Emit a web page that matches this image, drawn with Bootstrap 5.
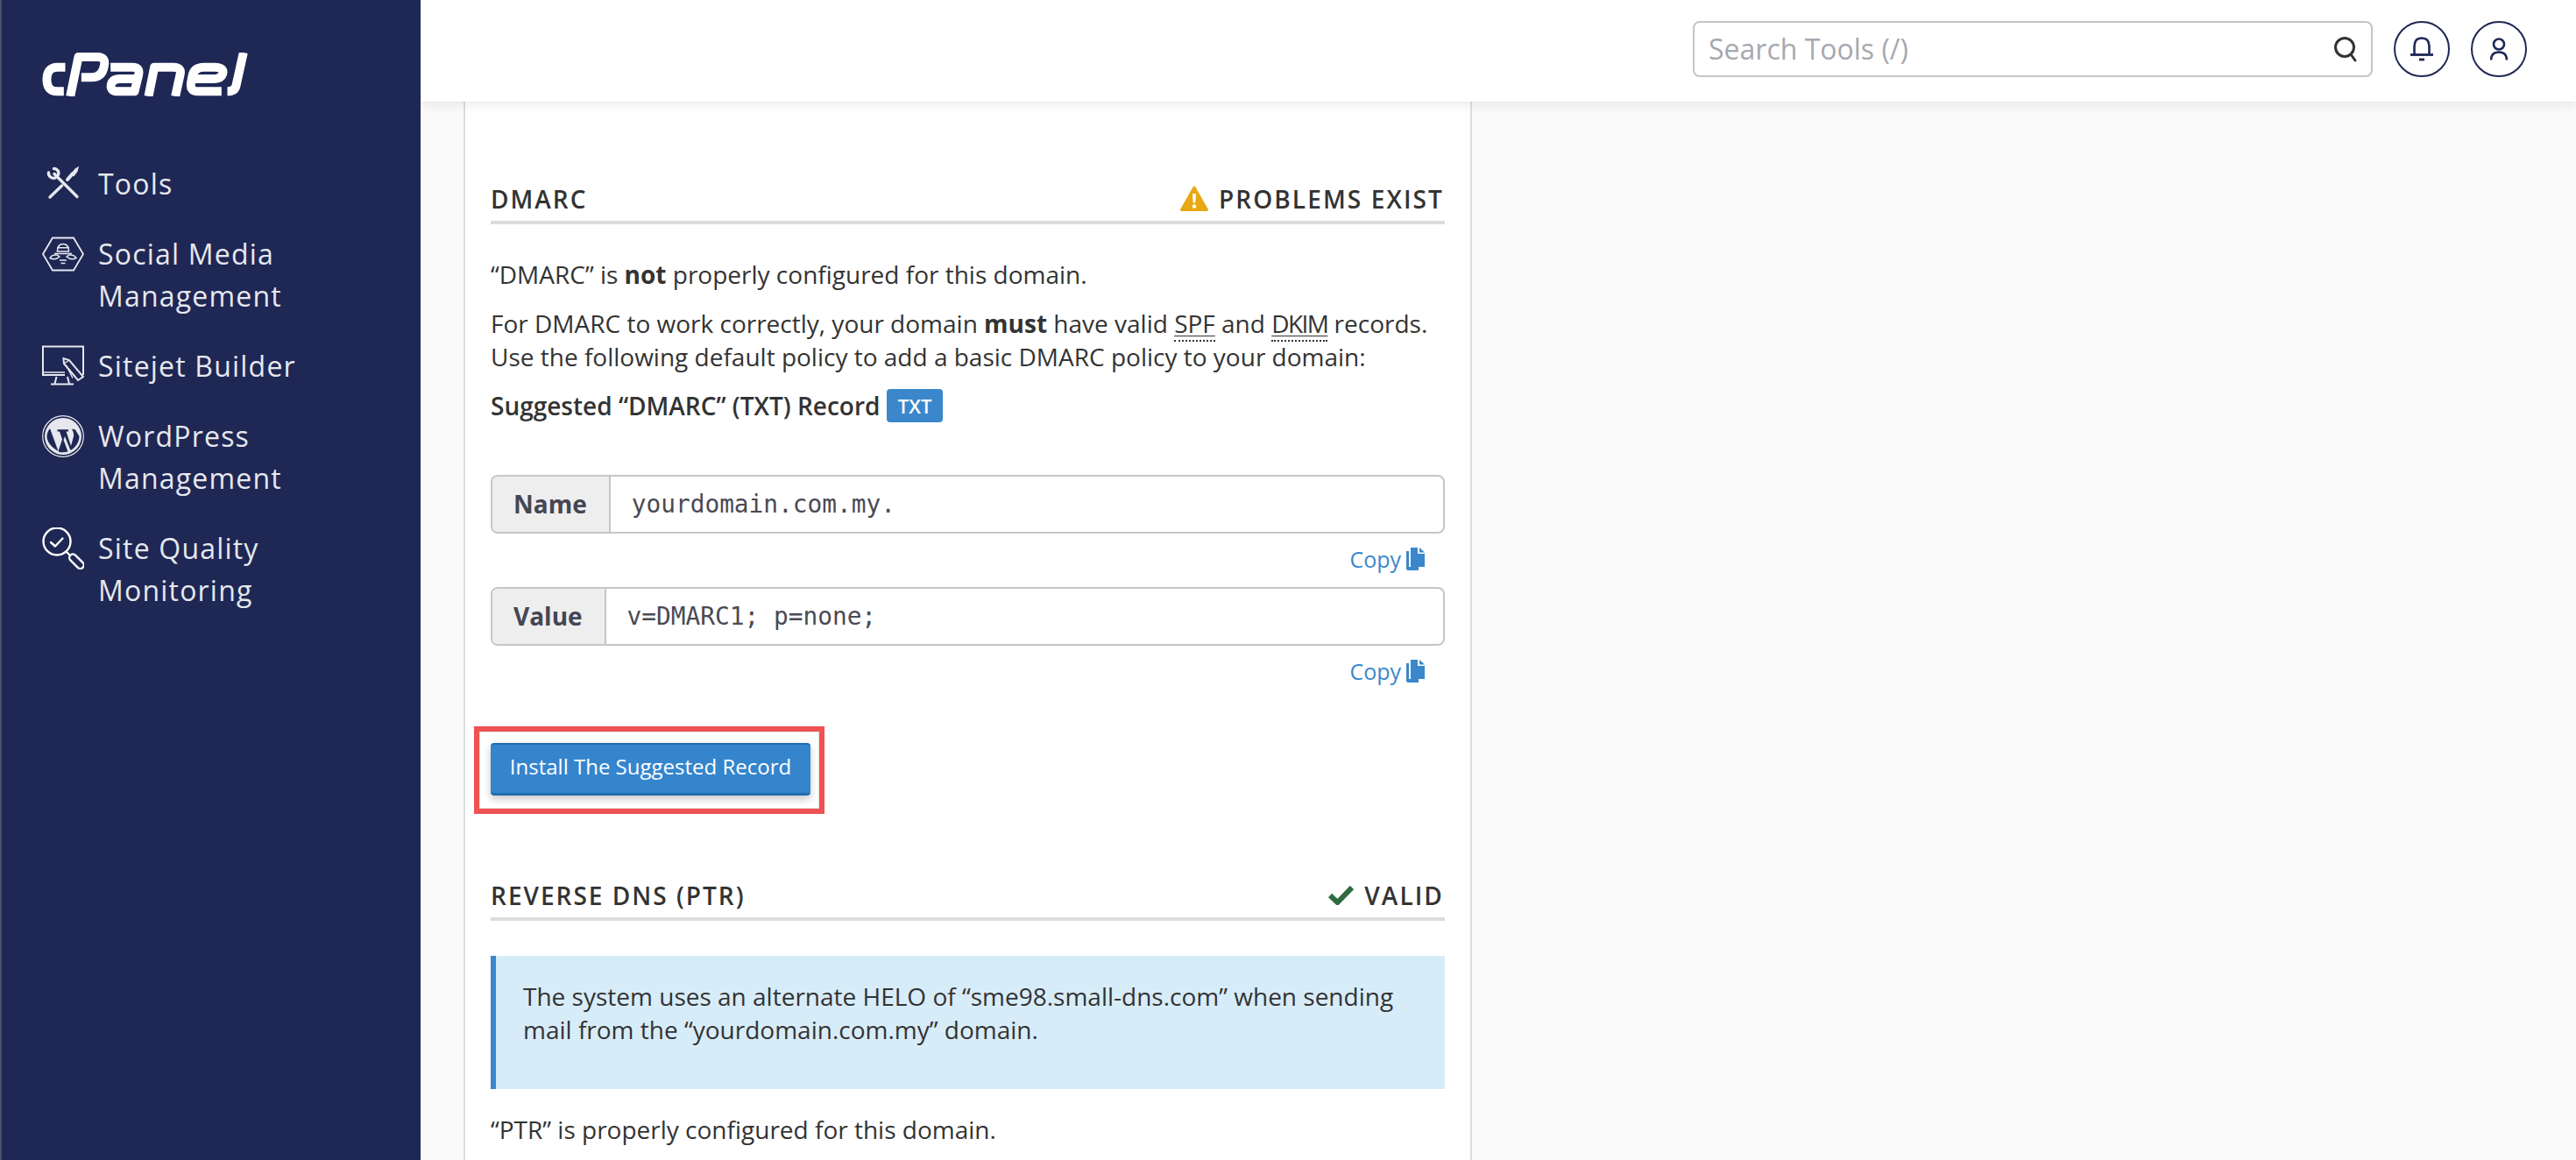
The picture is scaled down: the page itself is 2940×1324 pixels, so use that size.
<!DOCTYPE html>
<html lang="en">
<head>
<meta charset="utf-8">
<title>cPanel - Email Deliverability</title>
<link href="https://cdn.jsdelivr.net/npm/bootstrap@5.3.0/dist/css/bootstrap.min.css" rel="stylesheet">
<style>
html,body{height:100%;margin:0;overflow:hidden}
body{font-family:"Open Sans","Noto Sans",sans-serif;font-size:28px;line-height:38px;color:#333;background:#fafafa}
.app-shell{height:1324px}
.side-rail{width:480px;flex:none;background:#1f2754;border-left:2px solid #4b4f66;color:#e6e8ee;height:1324px}
.brand-wrap{padding:60px 0 0 46px;height:186px}
.brand-wrap svg{display:block}
.side-link{display:flex;gap:16px;padding-left:46px;margin-bottom:32px;font-size:32px;line-height:48px;letter-spacing:1.200px;color:#e6e8ee;text-decoration:none}
.side-ico{width:48px;height:48px;flex:none}
.main-col{flex:1;min-width:0;height:1324px;overflow:hidden}
.top-strip{height:116px;background:#fff;box-shadow:0 4px 12px rgba(0,0,0,.08);padding:24px 56px 0 0;position:relative;z-index:2;justify-content:flex-end;gap:24px}
.search-box{width:776px;height:64px;border:2px solid #c4c4c8;border-radius:8px;padding:0 14px 0 16px;background:#fff;color:#a5a9b0;font-size:32px}
.round-btn{width:64px;height:64px;border:2.500px solid #1f2754;border-radius:50%;background:#fff}
.page-sheet{width:1151px;margin-left:49px;background:#fff;border-left:2px solid #ddd;border-right:2px solid #ddd;padding:92px 29px 0 29px;height:1208px;overflow:hidden}
.sec-head{font-size:28px;line-height:38px;font-weight:600;letter-spacing:2px;padding-bottom:6px;border-bottom:4px solid #dcdcdc;color:#333}
.sec-state{display:flex;align-items:center;gap:12px;padding-right:1px;letter-spacing:2.100px}
.para{margin:0 0 18px}
.para-first{margin-top:38px}
.abbr-dot{border-bottom:2px dotted #333;text-decoration:underline;text-underline-offset:3px;text-decoration-thickness:1px}
.abbr-tight{letter-spacing:-1.600px}
.type-tag{display:inline-block;background:#3a87cb;color:#fff;font-size:22px;font-weight:600;line-height:38px;height:38px;padding:0 13px;border-radius:4px;margin-left:0;vertical-align:top}
.rec-group{display:flex;height:67px;border:2px solid #c6c6ca;border-radius:8px;overflow:hidden;background:#fff}
.rec-first{margin-top:60px}
.rec-label{background:#eee;color:#444654;font-weight:700;padding:0 25px 0 24px;line-height:63px;border-right:2px solid #c6c6ca}
.rec-value{font-family:"DejaVu Sans Mono","Liberation Mono",monospace;color:#4a4a55;font-size:27.800px;line-height:63px;padding-left:24px}
.copy-line{display:flex;justify-content:flex-end;align-items:center;gap:6px;height:38px;margin:10px 22px 13px 0;color:#3a87cb;font-size:25px}
.mark-box{display:inline-block;border:6px solid #ee5253;padding:13px 10px 15px 13px;margin:31px 0 74px -19px;box-shadow:inset 0 0 0 1px #e4e4e4}
.install-btn{display:block;width:365px;height:60px;padding:0 0 5px;background:#3585cd;border:0;border-top:2px solid #206db0;border-bottom:3px solid #206db0;border-radius:4px;color:#fff;font-size:24px;line-height:48px;box-shadow:0 4px 10px rgba(0,0,0,.22)}
.note-box{background:#d7ecf9;border-left:6px solid #3a87cb;padding:27px 30px 49px 31px;margin:40px 0 27px}
</style>
</head>
<body>
<div class="d-flex app-shell">
  <aside class="side-rail">
    <div class="brand-wrap">
      <svg width="236" height="50" viewBox="57 62 705 150" fill="none" stroke="#fff" stroke-width="30" stroke-linecap="butt" stroke-linejoin="round" aria-label="cPanel">
        <path d="M135 112H108Q74 112 72 150Q70 195 108 195H130"/>
        <path d="M152 212L180 77H245Q275 77 268 108Q262 147 225 147H190"/>
        <path d="M290 112H365Q392 112 386 138L372 195H315Q288 195 292 172Q296 152 322 152H380"/>
        <path d="M420 212L440 112H505Q535 112 528 138L512 212"/>
        <path d="M670 195H590Q560 195 566 165L570 142Q576 112 610 112H645Q680 112 674 135Q668 152 640 152H575"/>
        <path d="M745 62L720 175Q716 195 690 195"/>
      </svg>
    </div>
    <a class="side-link" href="#">
      <svg class="side-ico" viewBox="0 0 48 48" fill="none" stroke="#e6e8ee" stroke-width="3.4" stroke-linecap="round"><path d="M14 12.5L40 38.5M7.5 11C7 15 11 18.5 15 17M18.5 13.5C20 9.500 16.500 6 13.500 6.500M22.500 26L9 39"/><path d="M29 19L35 12" stroke-width="4"/><path d="M34 12.500L38 7.500L40.500 6L39.500 9.500L36 14Z" fill="#e6e8ee" stroke-width="2"/></svg>
      <span>Tools</span>
    </a>
    <a class="side-link" href="#">
      <svg class="side-ico" viewBox="0 0 48 48" fill="none" stroke="#e6e8ee" stroke-width="1.8"><path d="M1 24L12 5.500H36L47 24L36 42.500H12Z"/><path d="M17.500 21Q17.500 12.500 24 12.500Q30.500 12.500 30.500 21Z" stroke-width="1.600"/><path d="M17 16.800H31M14 23.500H34" stroke-width="1.400"/><path d="M9 28.500Q11 24.500 17 25L20 27Q15 31.500 9 28.500ZM39 28.500Q37 24.500 31 25L28 27Q33 31.500 39 28.500Z" stroke-width="1.500"/><path d="M20 31H28M21.500 34.500H26.500" stroke-width="1.500"/></svg>
      <span>Social Media<br>Management</span>
    </a>
    <a class="side-link" href="#">
      <svg class="side-ico" viewBox="0 0 48 48" fill="none" stroke="#e6e8ee" stroke-width="2"><path d="M47 34V1.500H1V34H26"/><path d="M1 31H26" stroke-width="1.500"/><path d="M10 44.500H36M16.500 36L14.500 44M29 36L31 44" stroke-width="2"/><path d="M24.500 16L25 21L41 40L47 36L31 17L24.500 15Z"/><path d="M25 21L30.500 17.500M28 23.500L35 37.500" stroke-width="1.400"/></svg>
      <span>Sitejet Builder</span>
    </a>
    <a class="side-link" href="#">
      <svg class="side-ico" viewBox="0 0 48 48"><circle cx="24" cy="24" r="23.300" fill="none" stroke="#e6e8ee" stroke-width="1.200"/><circle cx="24" cy="24" r="21" fill="#e6e8ee"/><path fill="#1f2754" d="M9 15L18.500 41L23 27.500L20 18.500H17.500V16.300H30V18.500H27.500L33 35L35.800 25C37 20 35 18.500 34 15.500L38 16.500L42.500 24C42.500 31 38 37 32.500 40L26 24L20 41.500C12 38 5.500 31 5.500 24C5.500 20.500 7 17.500 9 15Z"/><path fill="#1f2754" d="M24.500 28L29.500 41.500Q24 43 19 41.800Z"/></svg>
      <span>WordPress<br>Management</span>
    </a>
    <a class="side-link" href="#">
      <svg class="side-ico" viewBox="0 0 48 48" fill="none" stroke="#fff" stroke-width="2.400" stroke-linecap="round" stroke-linejoin="round"><circle cx="17" cy="16" r="15.500"/><path d="M10 17L15 21.500L23.500 12.500"/><path d="M28 28L31 31"/><rect x="0" y="0" width="8" height="20" rx="4" transform="translate(29.500 34.500) rotate(-45)"/></svg>
      <span>Site Quality<br>Monitoring</span>
    </a>
  </aside>
  <div class="main-col">
    <header class="top-strip d-flex">
      <div class="search-box d-flex align-items-center justify-content-between">
        <span>Search Tools (/)</span>
        <svg width="30" height="32" viewBox="0 0 30 32" fill="none" stroke="#333" stroke-width="3" stroke-linecap="round"><circle cx="14" cy="14" r="10.500"/><path d="M21 22L26 29"/></svg>
      </div>
      <div class="round-btn d-flex align-items-center justify-content-center">
        <svg width="26" height="28" viewBox="0 0 26 28" fill="none" stroke="#1f2754" stroke-width="2.600"><path d="M4.500 20V11Q4.500 1.500 13 1.500Q21.500 1.500 21.500 11V20"/><path d="M0 20.500H26" stroke-width="2.800"/><path d="M10 26H16" stroke-width="2.800"/></svg>
      </div>
      <div class="round-btn d-flex align-items-center justify-content-center">
        <svg width="20" height="26" viewBox="0 0 20 26" fill="none" stroke="#1f2754" stroke-width="2.600"><circle cx="10" cy="7.500" r="6"/><path d="M1 25.500Q1 16.500 10 16.500Q19 16.500 19 25.500"/></svg>
      </div>
    </header>
    <main class="page-sheet">
      <div class="sec-head d-flex justify-content-between">
        <span>DMARC</span>
        <span class="sec-state">
          <svg width="32" height="30" viewBox="0 0 32 30"><path fill="#e8a813" stroke="#e8a813" stroke-width="3" stroke-linejoin="round" d="M16 2L30.500 27.500H1.500Z"/><path fill="#fff" d="M14 9H18L17.300 19.500H14.700Z"/><circle cx="16" cy="23.500" r="2.200" fill="#fff"/></svg>
          <span>PROBLEMS EXIST</span>
        </span>
      </div>
      <p class="para para-first">“DMARC” is <strong>not</strong> properly configured for this domain.</p>
      <p class="para">For DMARC to work correctly, your domain <strong>must</strong> have valid <span class="abbr-dot">SPF</span> and <span class="abbr-dot abbr-tight">DKIM</span> records. Use the following default policy to add a basic DMARC policy to your domain:</p>
      <p class="para"><strong class="fw-semibold">Suggested “DMARC” (TXT) Record</strong> <span class="type-tag">TXT</span></p>
      <div class="rec-group rec-first">
        <div class="rec-label">Name</div>
        <div class="rec-value flex-grow-1">yourdomain.com.my.</div>
      </div>
      <div class="copy-line"><span>Copy</span>
        <svg width="22" height="26" viewBox="0 0 22 26"><path fill="#3a87cb" d="M0 4H3V22H14V26H2Q0 26 0 24Z"/><path fill="#3a87cb" d="M5 0H13V7H21V22H5Z"/><path fill="#3a87cb" d="M15 0L21 5.500H15Z"/></svg>
      </div>
      <div class="rec-group">
        <div class="rec-label">Value</div>
        <div class="rec-value flex-grow-1">v=DMARC1; p=none;</div>
      </div>
      <div class="copy-line"><span>Copy</span>
        <svg width="22" height="26" viewBox="0 0 22 26"><path fill="#3a87cb" d="M0 4H3V22H14V26H2Q0 26 0 24Z"/><path fill="#3a87cb" d="M5 0H13V7H21V22H5Z"/><path fill="#3a87cb" d="M15 0L21 5.500H15Z"/></svg>
      </div>
      <div class="mark-box"><button type="button" class="install-btn">Install The Suggested Record</button></div>
      <div class="sec-head d-flex justify-content-between">
        <span>REVERSE DNS (PTR)</span>
        <span class="sec-state">
          <svg width="29" height="22" viewBox="0 0 29 22" fill="none" stroke="#2f6b3f" stroke-width="6"><path d="M2 11L10.500 19L27 2"/></svg>
          <span>VALID</span>
        </span>
      </div>
      <div class="note-box">The system uses an alternate HELO of “sme98.small-dns.com” when sending mail from the “yourdomain.com.my” domain.</div>
      <p class="para">“PTR” is properly configured for this domain.</p>
    </main>
  </div>
</div>
<script src="https://cdn.jsdelivr.net/npm/bootstrap@5.3.0/dist/js/bootstrap.bundle.min.js"></script>
</body>
</html>
